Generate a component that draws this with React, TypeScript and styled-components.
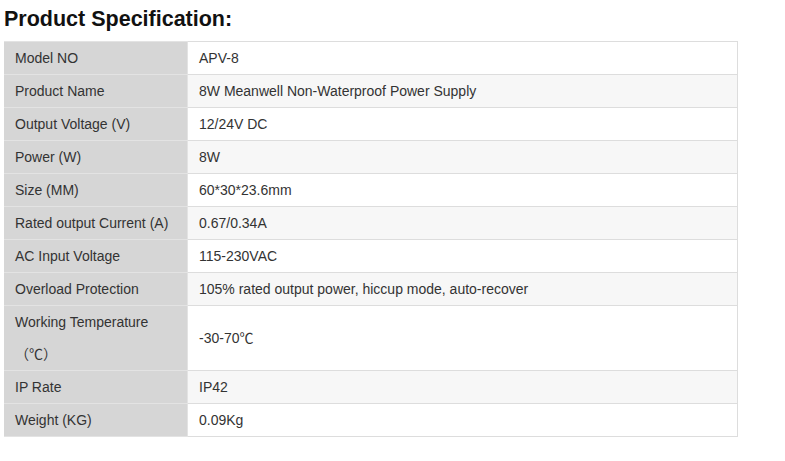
import React from 'react';
import styled, { createGlobalStyle } from 'styled-components';

type SpecRow = {
  label: string;
  value: string;
};

const SPECS: SpecRow[] = [
  { label: 'Model NO', value: 'APV-8' },
  { label: 'Product Name', value: '8W Meanwell Non-Waterproof Power Supply' },
  { label: 'Output Voltage (V)', value: '12/24V DC' },
  { label: 'Power (W)', value: '8W' },
  { label: 'Size (MM)', value: '60*30*23.6mm' },
  { label: 'Rated output Current (A)', value: '0.67/0.34A' },
  { label: 'AC Input Voltage', value: '115-230VAC' },
  { label: 'Overload Protection', value: '105% rated output power, hiccup mode, auto-recover' },
  { label: 'Working Temperature（℃）', value: '-30-70℃' },
  { label: 'IP Rate', value: 'IP42' },
  { label: 'Weight (KG)', value: '0.09Kg' },
];

const GlobalStyle = createGlobalStyle`
  html, body {
    margin: 0;
    padding: 0;
    background: #ffffff;
  }
`;

const Page = styled.main`
  padding: 6px 4px 0 4px;
  font-family: 'Liberation Sans', Arial, 'Noto Sans CJK SC', sans-serif;
  color: #333333;
`;

const Title = styled.h2`
  margin: 0 0 9px 0;
  font-size: 21.5px;
  line-height: 26px;
  font-weight: 700;
  color: #111111;
`;

const SpecTable = styled.table`
  width: 734px;
  border-collapse: collapse;
  font-size: 14px;
`;

const Row = styled.tr<{ $shaded: boolean }>`
  td:last-child {
    background-color: ${(p) => (p.$shaded ? '#f7f7f7' : '#ffffff')};
  }
`;

const Label = styled.td`
  width: 162px;
  padding: 0 10px 0 11px;
  line-height: 32px;
  background-color: #d6d6d6;
  border: 1px solid #e3e3e3;
  border-left: none;
  vertical-align: middle;
`;

const Value = styled.td`
  padding: 0 11px;
  line-height: 32px;
  border: 1px solid #dddddd;
  vertical-align: middle;
`;

const App: React.FC = () => {
  return (
    <>
      <GlobalStyle />
      <Page>
        <Title>Product Specification:</Title>
        <SpecTable>
          <tbody>
            {SPECS.map((row, idx) => (
              <Row key={`spec-${idx + 1}`} $shaded={idx % 2 === 1}>
                <Label>{row.label}</Label>
                <Value>{row.value}</Value>
              </Row>
            ))}
          </tbody>
        </SpecTable>
      </Page>
    </>
  );
};

export default App;
